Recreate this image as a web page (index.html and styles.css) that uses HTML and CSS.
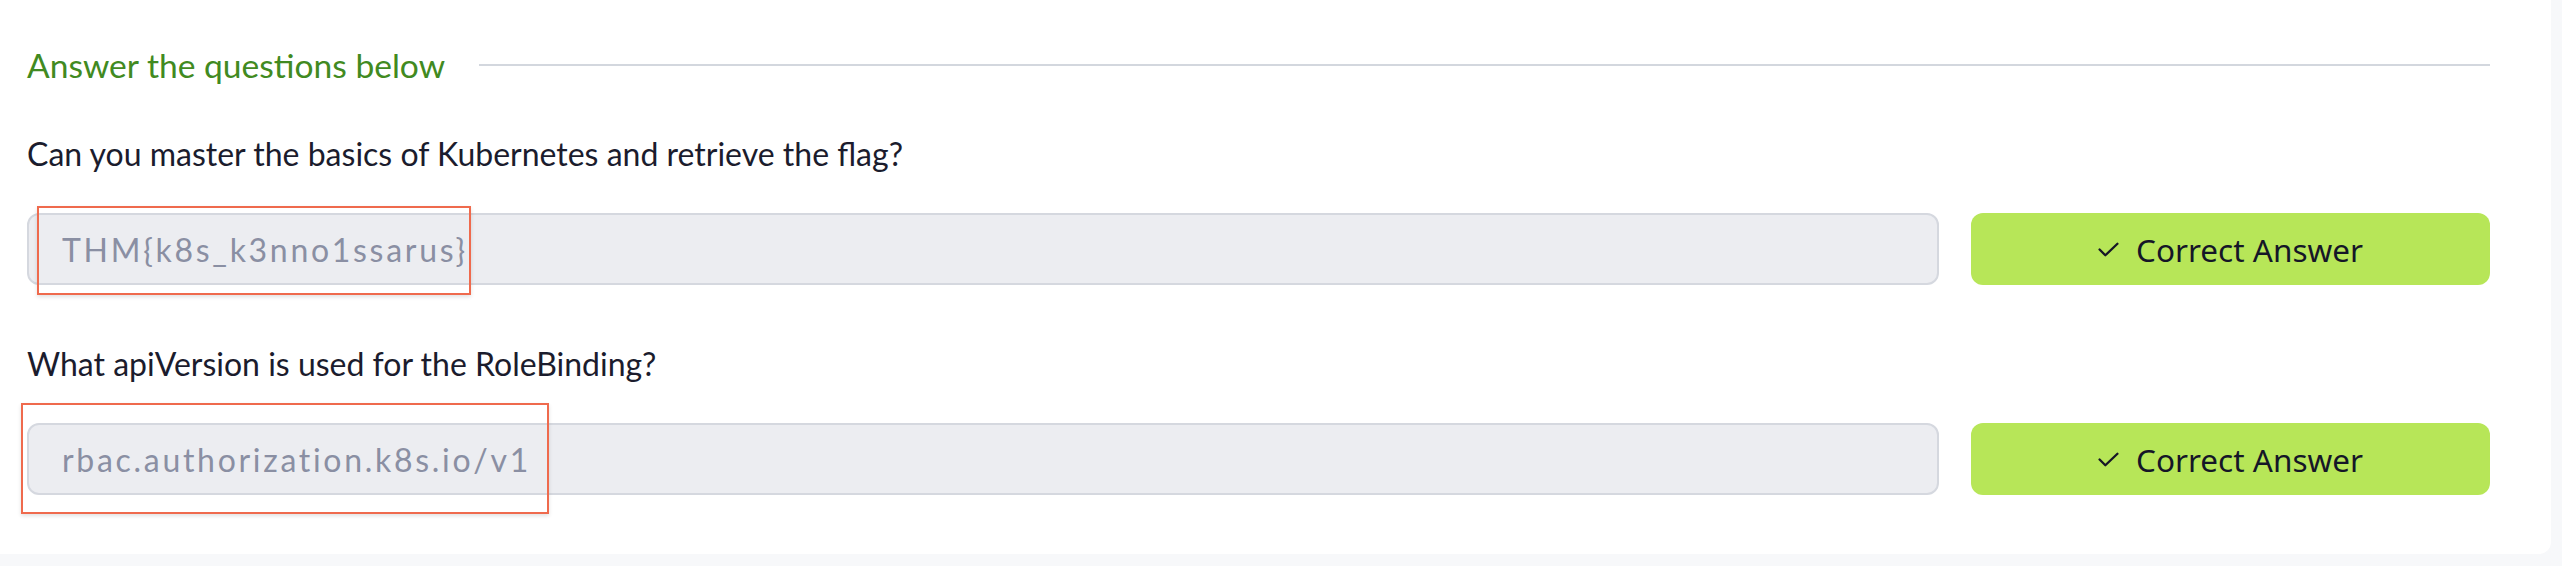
FILE: index.html
```html
<!DOCTYPE html>
<html lang="en">
<head>
<meta charset="utf-8">
<title>Answer the questions below</title>
<link rel="stylesheet" href="styles.css">
</head>
<body>
<section class="card">
  <div class="heading">
    <h3 class="heading-title">Answer the questions below</h3>
    <div class="heading-rule"></div>
  </div>

  <div class="question">
    <p class="question-text">Can you master the basics of Kubernetes and retrieve the flag?</p>
    <div class="answer-row">
      <div class="answer-field">
        <input class="answer-input" type="text" value="THM{k8s_k3nno1ssarus}" readonly>
        <span class="mark mark-one"></span>
      </div>
      <button class="answer-btn" type="button">
        <svg class="check" viewBox="0 0 20 14" width="21" height="15" aria-hidden="true"><polyline points="1.5,7 7,12.5 18.5,1.5" fill="none" stroke="#161726" stroke-width="2.2" stroke-linecap="round" stroke-linejoin="round"/></svg>
        <span>Correct Answer</span>
      </button>
    </div>
  </div>

  <div class="question">
    <p class="question-text">What apiVersion is used for the RoleBinding?</p>
    <div class="answer-row">
      <div class="answer-field">
        <input class="answer-input" type="text" value="rbac.authorization.k8s.io/v1" readonly>
        <span class="mark mark-two"></span>
      </div>
      <button class="answer-btn" type="button">
        <svg class="check" viewBox="0 0 20 14" width="21" height="15" aria-hidden="true"><polyline points="1.5,7 7,12.5 18.5,1.5" fill="none" stroke="#161726" stroke-width="2.2" stroke-linecap="round" stroke-linejoin="round"/></svg>
        <span>Correct Answer</span>
      </button>
    </div>
  </div>
</section>
</body>
</html>
```

FILE: styles.css
```css
* { box-sizing: border-box; }

html, body {
  margin: 0;
  padding: 0;
  background: #f7f8fa;
}

body {
  width: 2562px;
  height: 566px;
  overflow: hidden;
  font-family: "Lato", "Liberation Sans", sans-serif;
}

.card {
  width: 2551px;
  height: 554px;
  background: #ffffff;
  border-bottom-right-radius: 12px;
  padding: 41px 61px 0 27px;
  display: flex;
  flex-direction: column;
}

.heading {
  display: flex;
  align-items: center;
  gap: 34px;
  height: 48px;
}

.heading-title {
  margin: 0;
  font-weight: 400;
  font-size: 33.6px;
  line-height: 48px;
  color: #418a21;
  white-space: nowrap;
}

.heading-rule {
  flex: 1;
  height: 2px;
  background: #d3d7de;
}

.question {
  margin-top: 45px;
}

.question + .question {
  margin-top: 59px;
}

.question-text {
  margin: 0 0 39px;
  font-size: 32px;
  line-height: 40px;
  color: #1b1c2d;
}

.answer-row {
  display: grid;
  grid-template-columns: 1fr 519px;
  gap: 32px;
  height: 72px;
}

.answer-field {
  position: relative;
}

.answer-input {
  display: block;
  width: 100%;
  height: 72px;
  margin: 0;
  padding: 0 0 0 33px;
  border: 2px solid #d5d8df;
  border-radius: 12px;
  background: #ecedf1;
  color: #8a8fa3;
  font-family: "Lato", "Liberation Sans", sans-serif;
  font-size: 32px;
  letter-spacing: 2.7px;
  outline: none;
}

.mark {
  position: absolute;
  border: 2px solid #ef6a4d;
  box-shadow: 0 2px 4px rgba(0, 0, 0, 0.12);
  pointer-events: none;
}

.mark-one {
  left: 10px;
  top: -7px;
  width: 434px;
  height: 89px;
}

.mark-two {
  left: -6px;
  top: -20px;
  width: 528px;
  height: 111px;
}

.answer-btn {
  display: flex;
  align-items: center;
  justify-content: center;
  gap: 17px;
  height: 72px;
  margin: 0;
  padding: 0;
  border: none;
  border-radius: 12px;
  background: #b7e658;
  color: #151627;
  font-family: "Noto Sans", "Liberation Sans", sans-serif;
  font-size: 31.5px;
  cursor: pointer;
}

.check {
  flex: none;
}
```
